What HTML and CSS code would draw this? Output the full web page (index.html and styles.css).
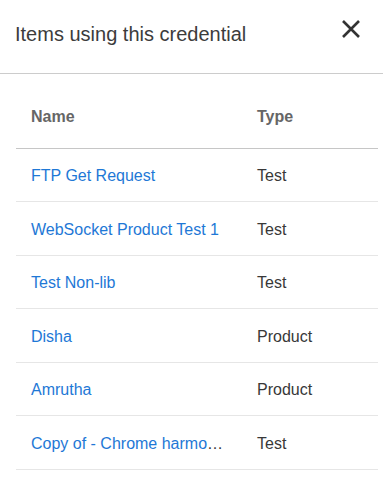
FILE: index.html
```html
<!DOCTYPE html>
<html lang="en">
<head>
    <meta charset="UTF-8">
    <meta name="viewport" content="width=device-width, initial-scale=1.0">
    <title>Items using this credential</title>
    <link rel="stylesheet" href="styles.css">
</head>
<body>
    <div class="dialog">
        <div class="dialog-header">
            <h2>Items using this credential</h2>
            <button class="close" aria-label="Close">
                <svg width="20" height="20" viewBox="0 0 20 20">
                    <path d="M2 2 L18 18 M18 2 L2 18" stroke="#333" stroke-width="2.6" stroke-linecap="butt"/>
                </svg>
            </button>
        </div>
        <div class="dialog-body">
            <table class="items">
                <thead>
                    <tr>
                        <th class="col-name">Name</th>
                        <th>Type</th>
                    </tr>
                </thead>
                <tbody>
                    <tr><td class="col-name"><a href="#">FTP Get Request</a></td><td>Test</td></tr>
                    <tr><td class="col-name"><a href="#">WebSocket Product Test 1</a></td><td>Test</td></tr>
                    <tr><td class="col-name"><a href="#">Test Non-lib</a></td><td>Test</td></tr>
                    <tr><td class="col-name"><a href="#">Disha</a></td><td>Product</td></tr>
                    <tr><td class="col-name"><a href="#">Amrutha</a></td><td>Product</td></tr>
                    <tr><td class="col-name"><a href="#" title="Copy of - Chrome harmony test">Copy of - Chrome harmony test</a></td><td>Test</td></tr>
                </tbody>
            </table>
        </div>
    </div>
</body>
</html>
```

FILE: styles.css
```css
* {
    box-sizing: border-box;
}

body {
    margin: 0;
    font-family: "Liberation Sans", Arial, sans-serif;
    background: #fff;
}

.dialog {
    width: 383px;
}

.dialog-header {
    display: flex;
    align-items: center;
    justify-content: space-between;
    height: 74px;
    padding: 0 20px 4px 15px;
    border-bottom: 1px solid #ccc;
}

.dialog-header h2 {
    margin: 0;
    font-size: 20px;
    font-weight: normal;
    color: #3c3c3c;
}

.close {
    border: 0;
    background: none;
    padding: 0;
    margin-top: -12px;
    width: 24px;
    height: 24px;
    display: flex;
    align-items: center;
    justify-content: center;
    cursor: pointer;
}

.dialog-body {
    padding: 10px 5px 0 16px;
}

.items {
    width: 362px;
    border-collapse: collapse;
    table-layout: fixed;
}

.items th,
.items td {
    padding: 0 15px;
    text-align: left;
    font-size: 16px;
    white-space: nowrap;
    overflow: hidden;
    text-overflow: ellipsis;
}

.items .col-name {
    width: 226px;
}

.items th {
    height: 64px;
    padding-top: 2px;
    font-size: 16px;
    font-weight: bold;
    color: #666;
    border-bottom: 1px solid #c6c6c6;
}

.items td {
    height: 53.5px;
    padding-top: 3px;
    color: #383838;
    border-bottom: 1px solid #e6e6e6;
}

.items a {
    color: #1e78d6;
    text-decoration: none;
}
```
